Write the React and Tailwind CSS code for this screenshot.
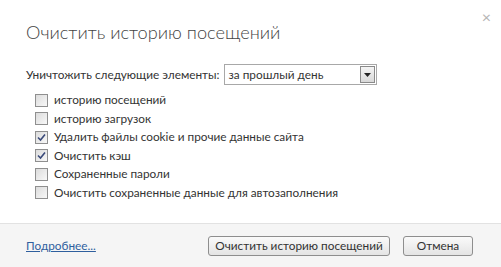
import React from "react";

const items = [
  { label: "историю посещений", checked: false },
  { label: "историю загрузок", checked: false },
  { label: "Удалить файлы cookie и прочие данные сайта", checked: true },
  { label: "Очистить кэш", checked: true },
  { label: "Сохраненные пароли", checked: false },
  { label: "Очистить сохраненные данные для автозаполнения", checked: false },
];

const Checkbox = ({ checked }) => (
  <span className="w-[13px] h-[13px] border border-[#8f8f8f] bg-gradient-to-br from-[#dcdcdc] to-[#f8f8f8] flex items-center justify-center shrink-0">
    {checked && (
      <svg width="9" height="9" viewBox="0 0 9 9">
        <path d="M1 4.5 L3.5 7 L8 1.5" fill="none" stroke="#3a4a7a" strokeWidth="1.6" />
      </svg>
    )}
  </span>
);

const App = () => {
  return (
    <div
      className="w-[501px] h-[267px] bg-white flex flex-col text-[#333]"
      style={{ fontFamily: 'Lato, "Noto Sans", sans-serif' }}
    >
      <div className="flex-1 relative px-[26px]">
        <span className="absolute right-[10px] top-[5px] text-[#b5b5b5] text-[16px]">×</span>
        <h1 className="pt-[19px] text-[18.2px] font-light leading-[26px] text-[#444] whitespace-nowrap">
          Очистить историю посещений
        </h1>
        <div className="mt-[19px] flex items-center gap-[4px] text-[11.8px] whitespace-nowrap">
          <span>Уничтожить следующие элементы:</span>
          <div className="w-[153px] h-[21px] border border-[#a8a8a8] flex items-center justify-between pl-[4px] pr-[1px]">
            <span>за прошлый день</span>
            <span className="w-[15px] h-[17px] border border-[#8a8a8a] bg-gradient-to-b from-[#f4f4f4] to-[#d8d8d8] flex items-center justify-center">
              <svg width="7" height="4" viewBox="0 0 7 4">
                <path d="M0 0 H7 L3.5 4 Z" fill="#222" />
              </svg>
            </span>
          </div>
        </div>
        <div className="mt-[6px] pl-[9px] flex flex-col text-[11.8px] whitespace-nowrap">
          {items.map((it, i) => (
            <div key={i} className="h-[18.5px] flex items-center gap-[6px]">
              <Checkbox checked={it.checked} />
              <span>{it.label}</span>
            </div>
          ))}
        </div>
      </div>
      <div className="h-[44px] bg-[#f5f5f5] border-t border-[#e2e2e2] flex items-center pl-[26px] pr-[28px] text-[11.8px] whitespace-nowrap">
        <a className="text-[#2f5f9e] underline">Подробнее...</a>
        <div className="ml-auto flex gap-[13px]">
          <button className="h-[20px] w-[182px] border border-[#8e8e8e] rounded-[3px] bg-gradient-to-b from-[#fafafa] to-[#e4e4e4] text-[#333] leading-none">
            Очистить историю посещений
          </button>
          <button className="h-[20px] w-[70px] border border-[#8e8e8e] rounded-[3px] bg-gradient-to-b from-[#fafafa] to-[#e4e4e4] text-[#333] leading-none">
            Отмена
          </button>
        </div>
      </div>
    </div>
  );
};

export default App;
